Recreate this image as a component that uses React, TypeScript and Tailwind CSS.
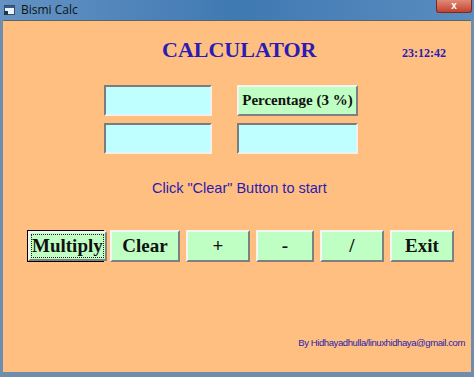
const buttons = [
  { label: "Clear", w: "w-[70px]" },
  { label: "+", w: "w-[64px]" },
  { label: "-", w: "w-[58px]" },
  { label: "/", w: "w-[64px]" },
  { label: "Exit", w: "w-[64px]" },
];

function WindowIcon() {
  return (
    <svg width="11" height="10" viewBox="0 0 11 10" className="mr-[6px]">
      <rect x="0.5" y="0.5" width="10" height="9" fill="#eef3f8" stroke="#3b4b5e" />
      <rect x="1" y="1" width="9" height="2" fill="#2d5e95" />
      <rect x="0" y="6" width="4" height="4" fill="#1e3550" />
    </svg>
  );
}

export default function App() {
  return (
    <div className="flex h-[377px] w-[474px] flex-col bg-[#6f8dac] font-['Liberation_Serif',serif]">
      {/* title bar */}
      <div className="relative flex h-[20px] items-center bg-gradient-to-r from-[#6493c4] via-[#3f79b2] to-[#5a8dc0] pl-[4px]">
        <WindowIcon />
        <span className="font-['Open_Sans',sans-serif] text-[12px] leading-none text-[#111]">Bismi Calc</span>
        <div className="absolute right-[2px] top-0 flex h-[13px] w-[36px] items-center justify-center rounded-b-[3px] border border-t-0 border-[#7a2a20] bg-gradient-to-b from-[#e08a78] to-[#c2412c]">
          <span className="font-['Liberation_Sans',sans-serif] text-[10px] font-bold leading-none text-white">x</span>
        </div>
      </div>

      {/* client area */}
      <div className="mx-[3px] flex h-[352px] flex-col border-t border-[#5a6470] bg-[#ffbf80]">
        <div className="flex items-baseline pt-[18px]">
          <span className="ml-[159px] text-[22px] font-bold leading-[22px] text-[#2a1cb4]">CALCULATOR</span>
          <span className="ml-auto mr-[25px] text-[12px] font-bold leading-none text-[#2a1cb4]">23:12:42</span>
        </div>

        <div className="ml-[101px] mt-[24px] grid grid-cols-[108px_121px] grid-rows-[31px_31px] gap-x-[25px] gap-y-[7px]">
          <div className="border-2 border-b-[#f0f0f0] border-l-[#7c7c7c] border-r-[#f0f0f0] border-t-[#7c7c7c] bg-[#c0ffff]" />
          <div className="flex items-center justify-center border-2 border-b-[#808080] border-l-[#f4f4f4] border-r-[#808080] border-t-[#f4f4f4] bg-[#c0ffc4] text-[15px] font-bold text-[#111]">
            Percentage (3 %)
          </div>
          <div className="border-2 border-b-[#f0f0f0] border-l-[#7c7c7c] border-r-[#f0f0f0] border-t-[#7c7c7c] bg-[#c0ffff]" />
          <div className="border-2 border-b-[#f0f0f0] border-l-[#7c7c7c] border-r-[#f0f0f0] border-t-[#7c7c7c] bg-[#c0ffff]" />
        </div>

        <div className="ml-[149px] mt-[27px] font-['Liberation_Sans',sans-serif] text-[14.5px] leading-[14.5px] text-[#2a1cb0]">
          Click "Clear" Button to start
        </div>

        <div className="ml-[24px] mt-[34px] flex h-[32px] gap-[6px]">
          <div className="flex w-[77px] border border-black">
            <div className="flex flex-1 items-center justify-center border-2 border-b-[#808080] border-l-[#f4f4f4] border-r-[#808080] border-t-[#f4f4f4] bg-[#c0ffc4] p-[1px]">
              <span className="flex h-full w-full items-center justify-center border border-dotted border-[#222] text-[19px] font-bold leading-none text-[#111]">
                Multiply
              </span>
            </div>
          </div>
          {buttons.map((b) => (
            <div
              key={b.label}
              className={`${b.w} flex items-center justify-center border-2 border-b-[#808080] border-l-[#f4f4f4] border-r-[#808080] border-t-[#f4f4f4] bg-[#c0ffc4] text-[19px] font-bold leading-none text-[#111]`}
            >
              {b.label}
            </div>
          ))}
        </div>

        <div className="mr-[6px] mt-[76px] flex justify-end font-['Liberation_Sans',sans-serif] text-[9.5px] leading-none tracking-[-0.4px] text-[#2a1cb0]">
          By Hidhayadhulla/linuxhidhaya@gmail.com
        </div>
      </div>
    </div>
  );
}
